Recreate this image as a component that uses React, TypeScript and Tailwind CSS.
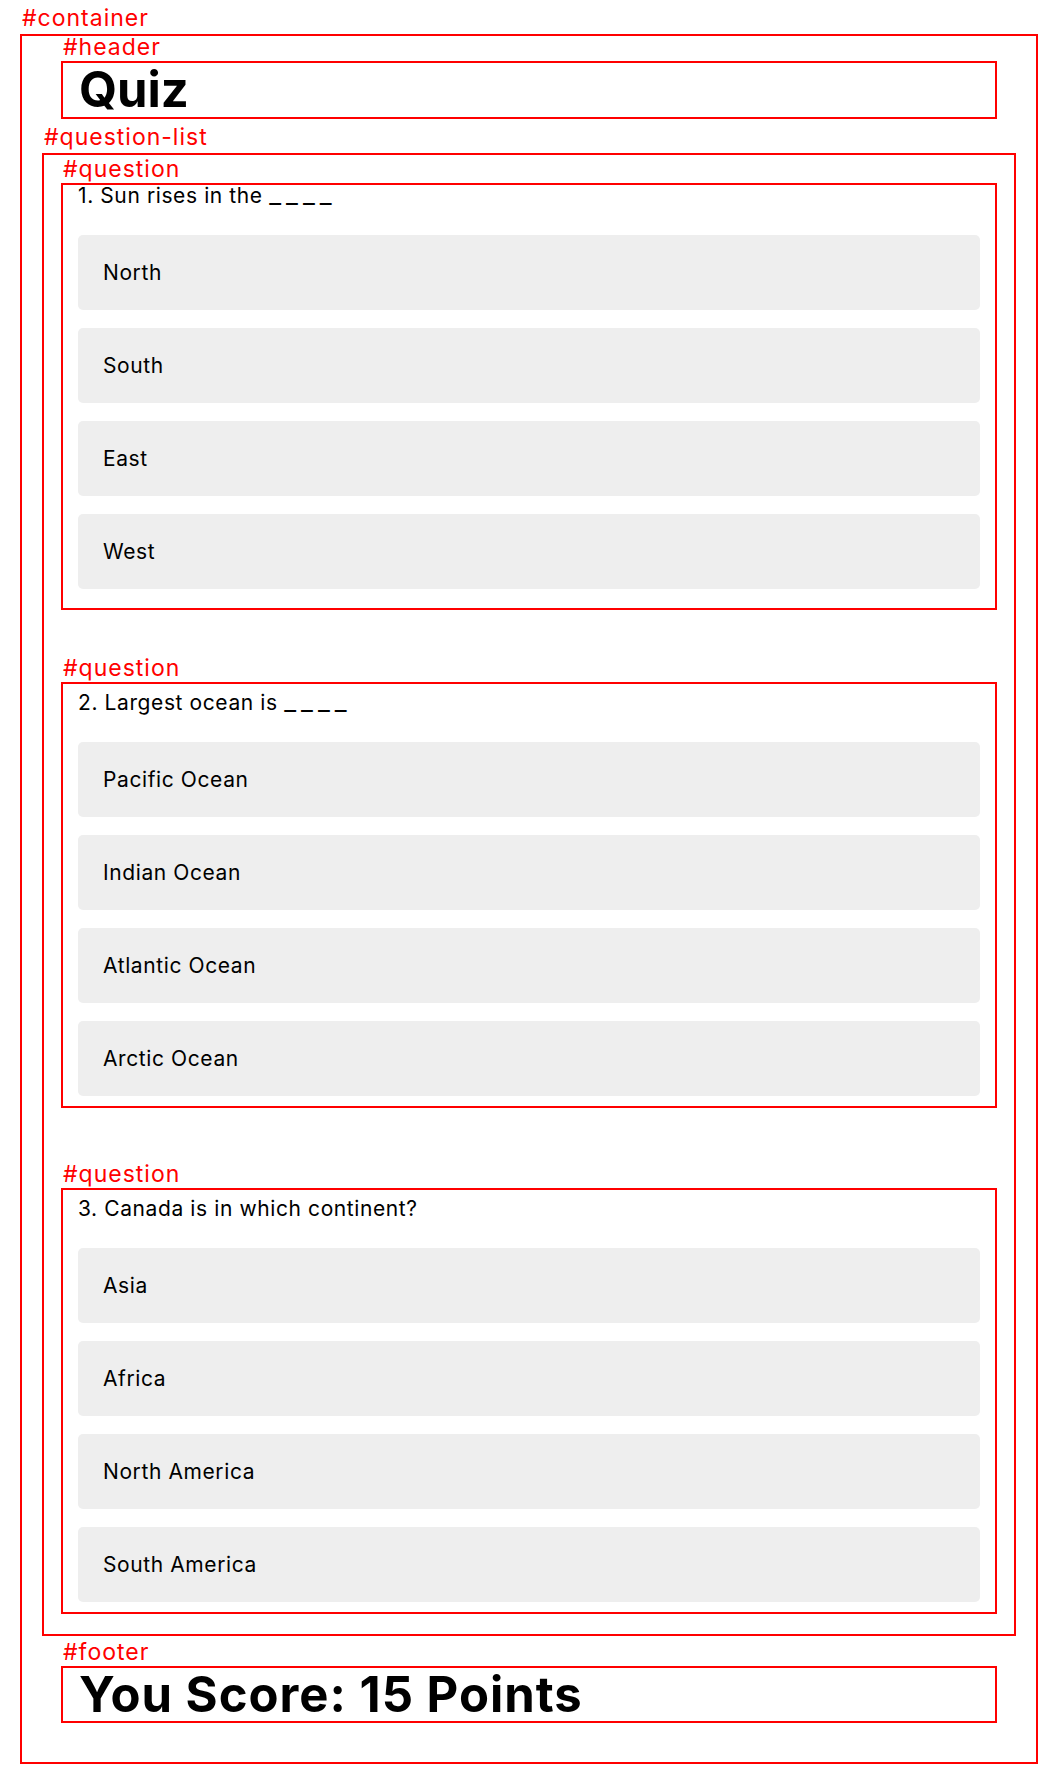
const questions = [
  {
    text: "1. Sun rises in the",
    blank: true,
    options: ["North", "South", "East", "West"],
    textClass: "-mt-[3px]",
    boxClass: "pb-[19px]",
    gap: "",
  },
  {
    text: "2. Largest ocean is",
    blank: true,
    options: ["Pacific Ocean", "Indian Ocean", "Atlantic Ocean", "Arctic Ocean"],
    textClass: "pt-[5px]",
    boxClass: "pb-[10px]",
    gap: "mt-[72px]",
  },
  {
    text: "3. Canada is in which continent?",
    blank: false,
    options: ["Asia", "Africa", "North America", "South America"],
    textClass: "pt-[5px]",
    boxClass: "pb-[10px]",
    gap: "mt-[80px]",
  },
];

function Label({ name, offset = "mb-[4px]" }: { name: string; offset?: string }) {
  return (
    <span
      className={`absolute left-0 bottom-full ${offset} text-[23px] leading-none tracking-[1px] text-[#ff0000] whitespace-nowrap`}
    >
      {name}
    </span>
  );
}

export default function App() {
  return (
    <div className="min-h-screen bg-white px-5 pt-[34px] pb-4 font-[Inter,sans-serif] text-black">
      <div className="relative border-2 border-[#ff0000] px-5 pt-[25px] pb-[39px]">
        <Label name="#container" offset="mb-[6px]" />

        <div className="relative mx-[19px] border-2 border-[#ff0000] px-4">
          <Label name="#header" />
          <h1 className="text-[49px] font-bold leading-[54px]">Quiz</h1>
        </div>

        <div className="relative mt-[34px] border-2 border-[#ff0000] px-[17px] pt-[28px] pb-[20px]">
          <Label name="#question-list" offset="mb-[6px]" />
          {questions.map((q) => (
            <div
              key={q.text}
              className={`relative border-2 border-[#ff0000] px-[15px] ${q.boxClass} ${q.gap}`}
            >
              <Label name="#question" />
              <p className={`text-[21px] leading-[28px] tracking-[0.6px] ${q.textClass}`}>
                {q.text}
                {q.blank && (
                  <>
                    {" "}
                    <span className="text-[26px] leading-[16px] tracking-[5px]">____</span>
                  </>
                )}
              </p>
              <div className="mt-[25px] flex flex-col gap-[18px]">
                {q.options.map((opt) => (
                  <div
                    key={opt}
                    className="flex h-[75px] items-center rounded-[5px] bg-[#eeeeee] px-[25px] text-[21px] tracking-[0.6px]"
                  >
                    {opt}
                  </div>
                ))}
              </div>
            </div>
          ))}
        </div>

        <div className="relative mx-[19px] mt-[30px] border-2 border-[#ff0000] px-4">
          <Label name="#footer" />
          <h2 className="text-[49px] font-bold leading-[53px] tracking-[1px]">You Score: 15 Points</h2>
        </div>
      </div>
    </div>
  );
}
